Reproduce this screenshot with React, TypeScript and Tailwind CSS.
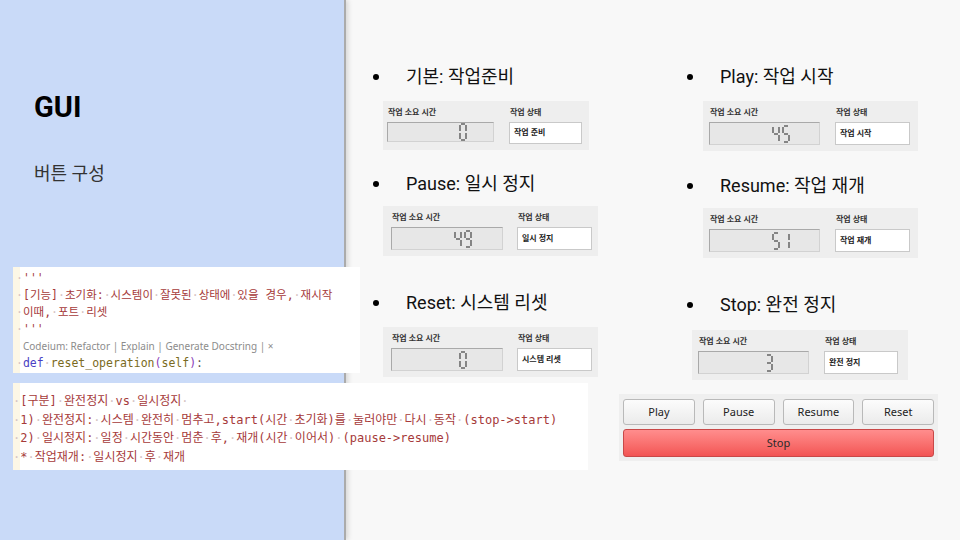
import { ReactNode } from "react";

// ── seven segment digits (QLCDNumber look) ────────────────────────────────────

const SEG: Record<string, [number, number, number, number]> = {
  a: [2, 1, 6, 1],
  b: [7, 2, 7, 8],
  c: [7, 10, 7, 16],
  d: [2, 17, 6, 17],
  e: [1, 10, 1, 16],
  f: [1, 2, 1, 8],
  g: [2, 9, 6, 9],
};

const DIGITS: Record<string, string> = {
  "0": "abcdef",
  "1": "bc",
  "2": "abged",
  "3": "abgcd",
  "4": "fgbc",
  "5": "afgcd",
  "6": "afgedc",
  "7": "abc",
  "8": "abcdefg",
  "9": "abcdfg",
};

function Digit({ d }: { d: string }) {
  return (
    <svg width="8" height="18" viewBox="0 0 8 18">
      {DIGITS[d].split("").map((s) => {
        const [x1, y1, x2, y2] = SEG[s];
        return <line key={s} x1={x1} y1={y1} x2={x2} y2={y2} stroke="#4f4f4f" strokeWidth="1.3" />;
      })}
    </svg>
  );
}

// ── status widget ────────────────────────────────────────────────────────────

interface PanelProps {
  box: string;
  lcd: string;
  gap: string;
  st: string;
  dpr: string;
  value: string;
  status: string;
}

function Panel({ box, lcd, gap, st, dpr, value, status }: PanelProps) {
  return (
    <div className={`flex items-start bg-[#eeeeee] pt-[7px] pb-[6px] self-start ${gap} ${box}`}>
      <div className="flex flex-col">
        <span className="h-[10px] leading-[10px] text-[8px] font-bold text-[#333] pl-[1px]">작업 소요 시간</span>
        <div
          className={`mt-[4px] flex items-center justify-end gap-[2px] bg-[#e7e7e7] border border-[#a9a9a9] border-r-[#d2d2d2] border-b-[#d2d2d2] ${lcd} ${dpr}`}
        >
          {value.split("").map((d, i) => (
            <Digit key={i} d={d} />
          ))}
        </div>
      </div>
      <div className="flex flex-col">
        <span className="h-[10px] leading-[10px] text-[8px] font-bold text-[#333] pl-[1px]">작업 상태</span>
        <div className={`mt-[4px] flex items-center bg-white border border-[#c9c9c9] pl-[4px] text-[8px] font-semibold text-[#222] ${st}`}>
          {status}
        </div>
      </div>
    </div>
  );
}

function Bullet({ children, cls }: { children: ReactNode; cls: string }) {
  return (
    <div className={`flex items-center h-[24px] ${cls}`}>
      <span className="w-[6px] h-[6px] rounded-full bg-black shrink-0" />
      <span className="ml-[27px] text-[18px] leading-[24px] text-[#111] whitespace-nowrap">{children}</span>
    </div>
  );
}

// ── code snippets ────────────────────────────────────────────────────────────

function Code({ text }: { text: string }) {
  return (
    <div className="whitespace-pre text-[#a63a3a]">
      {text.split("").map((c, i) =>
        c === "·" ? (
          <span key={i} className="text-[#d6c4c4]">
            ·
          </span>
        ) : (
          c
        )
      )}
    </div>
  );
}

const BOX1 = ["·'''", "·[기능]·초기화:·시스템이·잘못된·상태에·있을 경우,·재시작", "·이때,·포트·리셋", "·'''"];

const BOX2 = [
  "·[구분]·완전정지·vs·일시정지·",
  "·1)·완전정지:·시스템·완전히·멈추고,start(시간·초기화)를·눌러야만·다시·동작·(stop->start)",
  "·2)·일시정지:·일정·시간동안·멈춘·후,·재개(시간·이어서)·(pause->resume)",
  "·*·작업재개:·일시정지·후·재개",
  "·'''",
];

const BUTTONS = ["Play", "Pause", "Resume", "Reset"];

export default function App() {
  return (
    <div className="relative flex w-[960px] h-[540px] overflow-hidden bg-[#f8f8f8] font-['Roboto','Noto_Sans_CJK_KR',sans-serif]">
      {/* 왼쪽 패널 */}
      <aside className="relative z-10 w-[346px] shrink-0 h-full bg-[#c9daf8] border-r-2 border-[#ababab] shadow-[2px_0_5px_rgba(0,0,0,0.14)] pl-[34px]">
        <h1 className="mt-[93px] text-[29px] leading-[29px] font-bold text-black">GUI</h1>
        <p className="mt-[43px] text-[18px] leading-[18px] text-[#333]">버튼 구성</p>
      </aside>

      {/* 오른쪽 내용 */}
      <main className="flex-1 flex pl-[27px] pt-[65px]">
        <div className="w-[314px] shrink-0 flex flex-col">
          <Bullet cls="">기본: 작업준비</Bullet>
          <Panel
            box="ml-[10px] mt-[12px] pl-[4px] pr-[7px]"
            lcd="w-[107px] h-[20px]"
            gap="gap-[15px]"
            st="w-[73px] h-[22px]"
            dpr="pr-[26px]"
            value="0"
            status="작업 준비"
          />
          <Bullet cls="mt-[22px]">Pause: 일시 정지</Bullet>
          <Panel
            box="ml-[10px] mt-[10px] pl-[8px] pr-[6px]"
            lcd="w-[112px] h-[23px]"
            gap="gap-[14px]"
            st="w-[75px] h-[23px]"
            dpr="pr-[30px]"
            value="49"
            status="일시 정지"
          />
          <Bullet cls="mt-[35px]">Reset: 시스템 리셋</Bullet>
          <Panel
            box="ml-[10px] mt-[12px] pl-[8px] pr-[6px]"
            lcd="w-[112px] h-[23px]"
            gap="gap-[14px]"
            st="w-[75px] h-[23px]"
            dpr="pr-[35px]"
            value="0"
            status="시스템 리셋"
          />
        </div>

        <div className="flex-1 flex flex-col">
          <Bullet cls="">Play: 작업 시작</Bullet>
          <Panel
            box="ml-[16px] mt-[12px] pl-[6px] pr-[8px]"
            lcd="w-[111px] h-[23px]"
            gap="gap-[15px]"
            st="w-[75px] h-[23px]"
            dpr="pr-[29px]"
            value="45"
            status="작업 시작"
          />
          <Bullet cls="mt-[23px]">Resume: 작업 재개</Bullet>
          <Panel
            box="ml-[16px] mt-[10px] pl-[6px] pr-[8px]"
            lcd="w-[111px] h-[23px]"
            gap="gap-[15px]"
            st="w-[75px] h-[23px]"
            dpr="pr-[29px]"
            value="51"
            status="작업 재개"
          />
          <Bullet cls="mt-[35px]">Stop: 완전 정지</Bullet>
          <Panel
            box="ml-[5px] mt-[13px] pl-[6px] pr-[10px]"
            lcd="w-[111px] h-[23px]"
            gap="gap-[15px]"
            st="w-[74px] h-[23px]"
            dpr="pr-[35px]"
            value="3"
            status="완전 정지"
          />

          {/* 버튼 묶음 */}
          <div className="ml-[-68px] mt-[14px] w-[319px] bg-[#efefef] px-[4px] pt-[5px] pb-[4px] font-['Noto_Sans',sans-serif]">
            <div className="grid grid-cols-4 gap-x-[8px]">
              {BUTTONS.map((b) => (
                <button
                  key={b}
                  className="h-[26px] rounded-[3px] border border-[#b9b9b9] bg-gradient-to-b from-[#fcfcfc] to-[#ebebeb] text-[11px] text-[#222]"
                >
                  {b}
                </button>
              ))}
            </div>
            <button className="mt-[4px] w-full h-[28px] rounded-[3px] border border-[#c84848] bg-gradient-to-b from-[#ff8d8d] to-[#f25454] text-[11px] text-[#2a2a2a]">
              Stop
            </button>
          </div>
        </div>
      </main>

      {/* 코드 캡처 1 */}
      <div className="absolute z-20 left-[13px] top-[267px] w-[347px] h-[106px] overflow-hidden bg-[linear-gradient(to_right,#fcf7e6_7px,#ffffff_7px)] pl-[3px] pt-[3px] text-[11.5px] leading-[17px] font-['DejaVu_Sans_Mono','Noto_Sans_CJK_KR',monospace]">
        {BOX1.map((l, i) => (
          <Code key={i} text={l} />
        ))}
        <div className="pl-[7px] h-[17px] leading-[17px] text-[10px] text-[#8c8c8c] font-['Noto_Sans',sans-serif] whitespace-nowrap">
          Codeium: Refactor | Explain | Generate Docstring | ×
        </div>
        <div className="whitespace-pre">
          <span className="text-[#d6c4c4]">·</span>
          <span className="text-[#4a3fc4]">def</span>
          <span className="text-[#d6c4c4]">·</span>
          <span className="text-[#7a6a22]">reset_operation</span>
          <span className="text-[#8a3cb8]">(</span>
          <span className="text-[#7a6a22]">self</span>
          <span className="text-[#8a3cb8]">)</span>
          <span className="text-[#555]">:</span>
        </div>
      </div>

      {/* 코드 캡처 2 */}
      <div className="absolute z-20 left-[13px] top-[383px] w-[575px] h-[87px] overflow-hidden bg-[linear-gradient(to_right,#fcf7e6_7px,#ffffff_7px)] pt-[9px] text-[12px] leading-[18.5px] font-['DejaVu_Sans_Mono','Noto_Sans_CJK_KR',monospace]">
        {BOX2.map((l, i) => (
          <Code key={i} text={l} />
        ))}
      </div>
    </div>
  );
}
